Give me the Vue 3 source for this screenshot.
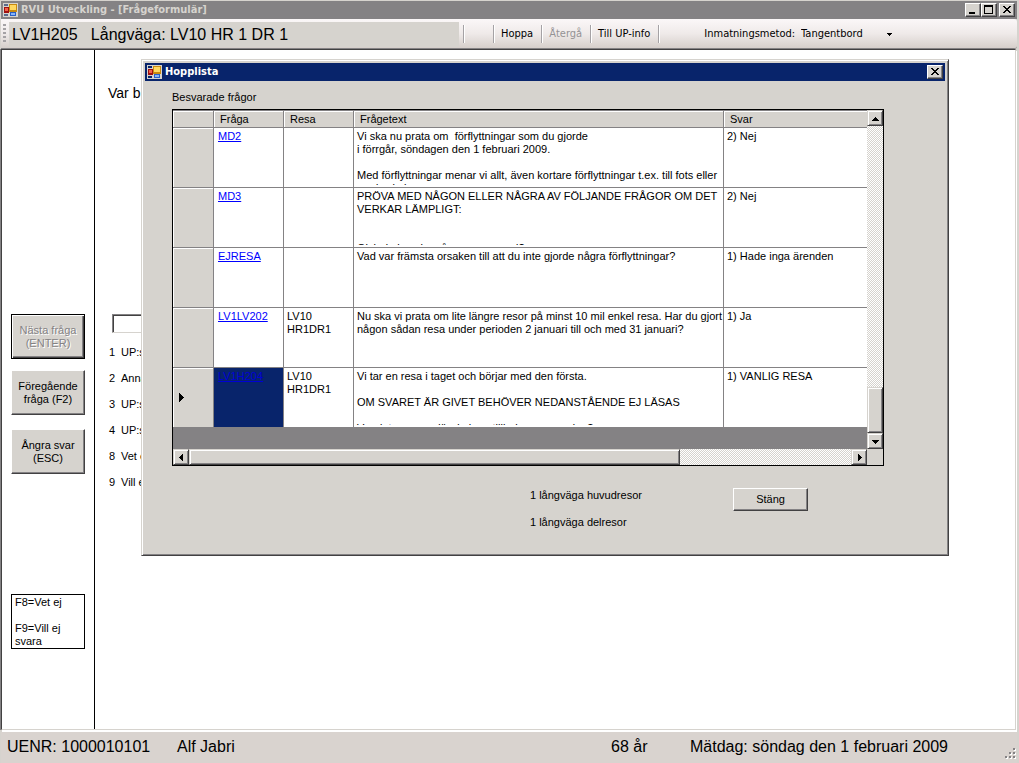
<script setup>
import { ref } from 'vue'

const heading = 'LV1H205   Långväga: LV10 HR 1 DR 1'
const method = ref('Tangentbord')
const answer = ref('')

const options = [
  { key: 1, text: 'UP:s' },
  { key: 2, text: 'Anna' },
  { key: 3, text: 'UP:s' },
  { key: 4, text: 'UP:s' },
  { key: 8, text: 'Vet e' },
  { key: 9, text: 'Vill e' },
]

const rows = [
  {
    id: 'MD2',
    trip: '',
    text: 'Vi ska nu prata om  förflyttningar som du gjorde\ni förrgår, söndagen den 1 februari 2009.\n\nMed förflyttningar menar vi allt, även kortare förflyttningar t.ex. till fots eller med cykel.',
    reply: '2) Nej',
  },
  {
    id: 'MD3',
    trip: '',
    text: 'PRÖVA MED NÅGON ELLER NÅGRA AV FÖLJANDE FRÅGOR OM DET VERKAR LÄMPLIGT:\n\n\nGick du kanske någon promenad?',
    reply: '2) Nej',
  },
  {
    id: 'EJRESA',
    trip: '',
    text: 'Vad var främsta orsaken till att du inte gjorde några förflyttningar?',
    reply: '1) Hade inga ärenden',
  },
  {
    id: 'LV1LV202',
    trip: 'LV10 HR1DR1',
    text: 'Nu ska vi prata om lite längre resor på minst 10 mil enkel resa. Har du gjort någon sådan resa under perioden 2 januari till och med 31 januari?',
    reply: '1) Ja',
  },
  {
    id: 'LV1H204',
    trip: 'LV10 HR1DR1',
    text: 'Vi tar en resa i taget och börjar med den första.\n\nOM SVARET ÄR GIVET BEHÖVER NEDANSTÅENDE EJ LÄSAS\n\nVar det en resa där du kom tillbaka samma dag?',
    reply: '1) VANLIG RESA',
    current: true,
  },
]
</script>

<template>
  <div class="window">
    <header class="titlebar">
      <svg class="app-icon" viewBox="0 0 15 14" aria-hidden="true">
        <rect x="0" y="0" width="15" height="14" fill="#d6d3ce" />
        <path d="M1 1h4v2H1zM1 11h4v2H1zM7 11h2v2H7z" fill="#5a6a8c" />
        <rect x="1" y="4" width="5" height="6" fill="#a01010" />
        <rect x="2" y="5" width="3" height="3" fill="#f06048" />
        <rect x="6" y="1" width="8" height="8" fill="#c88a10" />
        <rect x="7" y="2" width="6" height="5" fill="#ffd860" />
        <rect x="7" y="9" width="6" height="4" fill="#2860c8" />
        <rect x="8" y="10" width="4" height="2" fill="#88b4f8" />
      </svg>
      <h1>RVU Utveckling - [Frågeformulär]</h1>
      <button class="caption" type="button" aria-label="Minimera">
        <svg viewBox="0 0 12 10"><path d="M2 7h6v2H2z" /></svg>
      </button>
      <button class="caption" type="button" aria-label="Maximera">
        <svg viewBox="0 0 12 10"><path d="M1 0h9v9H1zM2 2v6h7V2z" fill-rule="evenodd" /></svg>
      </button>
      <button class="caption close" type="button" aria-label="Stäng fönster">
        <svg viewBox="0 0 12 10"><path d="M2 1h2v1h1v1h2v-1h1v-1h2v1h-1v1h-1v1h-1v1h1v1h1v1h1v1h-2v-1h-1v-1h-2v1h-1v1h-2v-1h1v-1h1v-1h1v-1h-1v-1h-1v-1h-1z" /></svg>
      </button>
    </header>

    <div class="toolbar">
      <span class="grip"></span>
      <span class="heading">{{ heading }}</span>
      <span class="separator"></span>
      <span class="blank"></span>
      <span class="separator"></span>
      <button type="button" class="tool">Hoppa</button>
      <span class="separator"></span>
      <button type="button" class="tool" disabled>Återgå</button>
      <span class="separator"></span>
      <button type="button" class="tool">Till UP-info</button>
      <span class="separator"></span>
      <label class="method-label" for="method">Inmatningsmetod:</label>
      <span class="method">
        <select id="method" v-model="method">
          <option>Tangentbord</option>
        </select>
        <svg class="caret" viewBox="0 0 5 3" aria-hidden="true"><path d="M0 0h5v1H0zM1 1h3v1H1zM2 2h1v1H2z" /></svg>
      </span>
    </div>

    <main class="client">
      <aside class="sidebar">
        <button type="button" class="side default" disabled>Nästa fråga<br />(ENTER)</button>
        <button type="button" class="side second">Föregående<br />fråga (F2)</button>
        <button type="button" class="side third">Ångra svar<br />(ESC)</button>
        <p class="hint">F8=Vet ej<br /><br />F9=Vill ej<br />svara</p>
      </aside>
      <section class="question">
        <label for="answer">Var b</label>
        <input id="answer" v-model="answer" type="text" />
        <ul>
          <li v-for="option in options" :key="option.key">
            <span class="key">{{ option.key }}</span>{{ option.text }}
          </li>
        </ul>
      </section>
    </main>

    <footer class="status">
      <span>UENR: 1000010101</span>
      <span>Alf Jabri</span>
      <span>68 år</span>
      <span>Mätdag: söndag den 1 februari 2009</span>
      <svg class="resize" viewBox="0 0 12 12" aria-hidden="true">
        <path d="M9 1h2v2H9zM5 5h2v2H5zM9 5h2v2H9zM1 9h2v2H1zM5 9h2v2H5zM9 9h2v2H9z" fill="#fff" />
        <path d="M8 0h2v2H8zM4 4h2v2H4zM8 4h2v2H8zM0 8h2v2H0zM4 8h2v2H4zM8 8h2v2H8z" fill="#848284" />
      </svg>
    </footer>

    <section class="dialog" role="dialog" aria-labelledby="dialog-title">
      <header class="titlebar active">
        <svg class="app-icon" viewBox="0 0 15 14" aria-hidden="true">
          <rect x="0" y="0" width="15" height="14" fill="#d6d3ce" />
          <path d="M1 1h4v2H1zM1 11h4v2H1zM7 11h2v2H7z" fill="#08246b" />
          <rect x="1" y="4" width="5" height="6" fill="#a01010" />
          <rect x="2" y="5" width="3" height="3" fill="#f06048" />
          <rect x="6" y="1" width="8" height="8" fill="#c88a10" />
          <rect x="7" y="2" width="6" height="5" fill="#ffd860" />
          <rect x="7" y="9" width="6" height="4" fill="#2860c8" />
          <rect x="8" y="10" width="4" height="2" fill="#88b4f8" />
        </svg>
        <h2 id="dialog-title">Hopplista</h2>
        <button class="caption" type="button" aria-label="Stäng dialog">
          <svg viewBox="0 0 12 10"><path d="M2 1h2v1h1v1h2v-1h1v-1h2v1h-1v1h-1v1h-1v1h1v1h1v1h1v1h-2v-1h-1v-1h-2v1h-1v1h-2v-1h1v-1h1v-1h1v-1h-1v-1h-1v-1h-1z" /></svg>
        </button>
      </header>
      <div class="dialog-body">
        <p id="grid-label" class="grid-label">Besvarade frågor</p>
        <div class="grid">
          <div class="viewport">
            <table aria-labelledby="grid-label">
              <colgroup>
                <col class="c-head" />
                <col class="c-short" />
                <col class="c-short" />
                <col class="c-text" />
                <col />
              </colgroup>
              <thead>
                <tr>
                  <th class="corner-cell"></th>
                  <th>Fråga</th>
                  <th>Resa</th>
                  <th>Frågetext</th>
                  <th>Svar</th>
                </tr>
              </thead>
              <tbody>
                <tr v-for="row in rows" :key="row.id" :class="{ current: row.current }">
                  <th>
                    <svg v-if="row.current" class="marker" viewBox="0 0 5 9"><path d="M0 0h1v1h1v1h1v1h1v1h1v1h-1v1h-1v1h-1v1h-1v1H0z" /></svg>
                  </th>
                  <td class="link"><div><a href="#">{{ row.id }}</a></div></td>
                  <td><div>{{ row.trip }}</div></td>
                  <td><div>{{ row.text }}</div></td>
                  <td><div>{{ row.reply }}</div></td>
                </tr>
              </tbody>
            </table>
          </div>
          <div class="scroll vertical">
            <button type="button" aria-label="Upp"><svg viewBox="0 0 7 7"><path d="M3 2h1v1h1v1h1v1h1v1H0V5h1V4h1V3h1z" /></svg></button>
            <span class="track"></span>
            <span class="thumb"></span>
            <button type="button" aria-label="Ned"><svg viewBox="0 0 7 7"><path d="M0 2h7v1H6v1H5v1H4v1H3V5H2V4H1V3H0z" /></svg></button>
          </div>
          <div class="scroll horizontal">
            <button type="button" aria-label="Vänster"><svg viewBox="0 0 7 7"><path d="M5 0v7H4V6H3V5H2V4H1V3h1V2h1V1h1V0z" /></svg></button>
            <span class="thumb"></span>
            <span class="track"></span>
            <button type="button" aria-label="Höger"><svg viewBox="0 0 7 7"><path d="M2 0v7h1V6h1V5h1V4h1V3H5V2H4V1H3V0z" /></svg></button>
          </div>
        </div>
        <div class="dialog-footer">
          <div class="counts">
            <p>1 långväga huvudresor</p>
            <p>1 långväga delresor</p>
          </div>
          <button type="button" class="dismiss">Stäng</button>
        </div>
      </div>
    </section>
  </div>
</template>

<style>
body {
  margin: 0;
  background: #d6d3ce;
}
</style>

<style scoped>
* {
  box-sizing: border-box;
}

.window {
  position: relative;
  display: flex;
  flex-direction: column;
  height: 100vh;
  overflow: hidden;
  padding: 1px 2px 0 1px;
  background: #d6d3ce;
  color: #000;
  font: 11px/13px "Liberation Sans", Arial, sans-serif;
}

button,
input,
select {
  margin: 0;
  padding: 0;
  border-radius: 0;
  color: inherit;
  font: inherit;
}

p,
ul,
h1,
h2 {
  margin: 0;
  padding: 0;
}

.titlebar {
  display: flex;
  flex: none;
  align-items: center;
  height: 18px;
  padding: 0 2px;
  background: #848284;
  color: #d6d3ce;
}

.titlebar.active {
  background: #08246b;
  color: #fff;
}

.app-icon {
  width: 15px;
  height: 14px;
  margin-right: 3px;
}

h1,
h2 {
  flex: 1;
  font: bold 11px/16px "DejaVu Sans Condensed", "DejaVu Sans", sans-serif;
}

.caption {
  display: block;
  width: 16px;
  height: 14px;
  border: 1px solid;
  border-color: #fff #424142 #424142 #fff;
  background: #d6d3ce;
  box-shadow: inset -1px -1px #848284;
  color: #000;
}

.caption.close {
  margin-left: 2px;
}

.caption svg {
  display: block;
  width: 12px;
  height: 10px;
  margin-left: 1px;
}

.toolbar {
  display: flex;
  flex: none;
  align-items: center;
  height: 30px;
  padding: 2px 0 1px 2px;
  border-bottom: 1px solid #848284;
  border-radius: 0 3px 3px 0;
  background: linear-gradient(#fbf7f8, #efeae9 50%, #d6cfcb);
  font: 11px/14px "DejaVu Sans Condensed", "DejaVu Sans", sans-serif;
}

.grip {
  width: 3px;
  height: 20px;
  margin-right: 3px;
  background: repeating-linear-gradient(#a5a2a5 0 2px, transparent 2px 4px);
}

.heading {
  width: 450px;
  height: 25px;
  padding-left: 3px;
  background: #d6d3ce;
  font: 16px/25px "Liberation Sans", Arial, sans-serif;
  white-space: pre;
}

.separator {
  width: 2px;
  height: 18px;
  margin: 0 4px;
  border-left: 1px solid #a5a2a5;
  border-right: 1px solid #fff;
}

.blank {
  width: 20px;
}

.tool {
  padding: 0 4px 0 2px;
  border: 0;
  background: none;
}

.tool:disabled {
  color: #949294;
}

.method-label {
  margin-left: 40px;
}

.method {
  position: relative;
  width: 96px;
  margin-left: 6px;
}

.method select {
  display: block;
  width: 100%;
  border: 0;
  appearance: none;
  background: none;
}

.caret {
  position: absolute;
  top: 6px;
  right: 5px;
  width: 5px;
  height: 3px;
}

.client {
  display: flex;
  flex: 1;
  min-height: 0;
  margin-right: 1px;
  border-top: 1px solid #424142;
  border-right: 1px solid #d6d3ce;
  border-bottom: 1px solid #d6d3ce;
  border-left: 1px solid #424142;
  background: #fff;
  box-shadow: 1px 2px #fff, -1px 0 #848284;
}

.sidebar {
  display: flex;
  flex: none;
  flex-direction: column;
  width: 93px;
  padding: 264px 9px 0;
  border-right: 1px solid #000;
}

.side {
  height: 45px;
  border: 1px solid;
  border-color: #fff #424142 #424142 #fff;
  background: #d6d3ce;
  box-shadow: inset -1px -1px #848284;
}

.side.default {
  border: 1px solid #000;
  box-shadow: inset 1px 1px #fff, inset -1px -1px #424142, inset -2px -2px #848284;
}

.side:disabled {
  color: #848284;
  text-shadow: 1px 1px #fff;
}

.second {
  margin-top: 11px;
}

.third {
  margin-top: 14px;
}

.hint {
  margin-top: 120px;
  padding: 1px 3px 0;
  border: 1px solid #000;
}

.question {
  padding: 34px 0 0 13px;
}

.question label {
  display: block;
  font-size: 14px;
  line-height: 18px;
}

.question input {
  display: block;
  width: 60px;
  height: 19px;
  margin: 212px 0 0 4px;
  border: 1px solid;
  border-color: #848284 #d6d3ce #d6d3ce #848284;
  background: #fff;
  box-shadow: inset 1px 1px #424142;
}

ul {
  margin-top: 6px;
  list-style: none;
}

li {
  display: flex;
  height: 26px;
  line-height: 26px;
  padding-left: 1px;
}

.key {
  width: 12px;
}

.status {
  display: grid;
  flex: none;
  grid-template-columns: 170px 434px 79px 1fr 12px;
  align-items: center;
  height: 31px;
  margin-top: 2px;
  padding: 0 0 2px 6px;
  background: #d9d3cf;
  font-size: 16px;
  line-height: 20px;
}

.resize {
  align-self: end;
  width: 12px;
  height: 12px;
  margin-bottom: 1px;
}

.dialog {
  position: absolute;
  top: 59px;
  left: 141px;
  width: 808px;
  padding: 2px;
  border: 1px solid;
  border-color: #d6d3ce #424142 #424142 #d6d3ce;
  background: #d6d3ce;
  box-shadow: inset 1px 1px #fff, inset -1px -1px #848284;
}

.dialog .titlebar {
  margin: 1px;
}

.dialog-body {
  padding: 9px 62px 24px 28px;
}

.grid-label {
  height: 18px;
}

.grid {
  display: grid;
  grid-template-columns: minmax(0, 1fr) 16px;
  grid-template-rows: 339px 16px;
  border: 1px solid #000;
}

.viewport {
  overflow: hidden;
  background: #848284;
}

table {
  width: 100%;
  border-spacing: 0;
  table-layout: fixed;
}

.c-head {
  width: 41px;
}

.c-short {
  width: 70px;
}

.c-text {
  width: 370px;
}

th,
td {
  padding: 0;
  border-right: 1px solid #848284;
  border-bottom: 1px solid #848284;
  font-weight: normal;
  text-align: left;
  vertical-align: top;
}

th:last-child,
td:last-child {
  border-right: 0;
}

thead th {
  height: 18px;
  padding: 2px 0 0 6px;
  border-top: 1px solid #848284;
  background: #d6d3ce;
  box-shadow: inset 1px 1px #fff;
}

tbody th {
  background: #d6d3ce;
  box-shadow: inset 1px 1px #fff;
  vertical-align: middle;
}

td {
  height: 60px;
  background: #fff;
}

td div {
  height: 57px;
  overflow: hidden;
  padding: 2px 0 0 3px;
  white-space: pre-wrap;
}

td.link div {
  padding-left: 4px;
}

.current .link {
  background: #08246b;
}

a {
  color: #00f;
}

.current a {
  color: #0000d6;
}

.marker {
  display: block;
  width: 5px;
  height: 9px;
  margin-left: 6px;
}

.scroll {
  display: flex;
}

.vertical {
  flex-direction: column;
}

.scroll button,
.thumb {
  display: flex;
  flex: none;
  align-items: center;
  justify-content: center;
  width: 16px;
  height: 16px;
  border: 1px solid;
  border-color: #d6d3ce #424142 #424142 #d6d3ce;
  background: #d6d3ce;
  box-shadow: inset 1px 1px #fff, inset -1px -1px #848284;
}

.scroll svg {
  width: 7px;
  height: 7px;
}

.track {
  flex: 1;
  background: repeating-conic-gradient(#fff 0 25%, #d6d3ce 0 50%) 0 0 / 2px 2px;
}

.vertical .thumb {
  height: 46px;
}

.horizontal .thumb {
  width: 491px;
}

.dialog-footer {
  display: flex;
  justify-content: space-between;
  padding: 22px 76px 0 358px;
}

.counts {
  display: grid;
  gap: 14px;
  padding-top: 1px;
}

.dismiss {
  width: 75px;
  height: 23px;
  border: 1px solid;
  border-color: #fff #424142 #424142 #fff;
  background: #d6d3ce;
  box-shadow: inset -1px -1px #848284;
}
</style>
